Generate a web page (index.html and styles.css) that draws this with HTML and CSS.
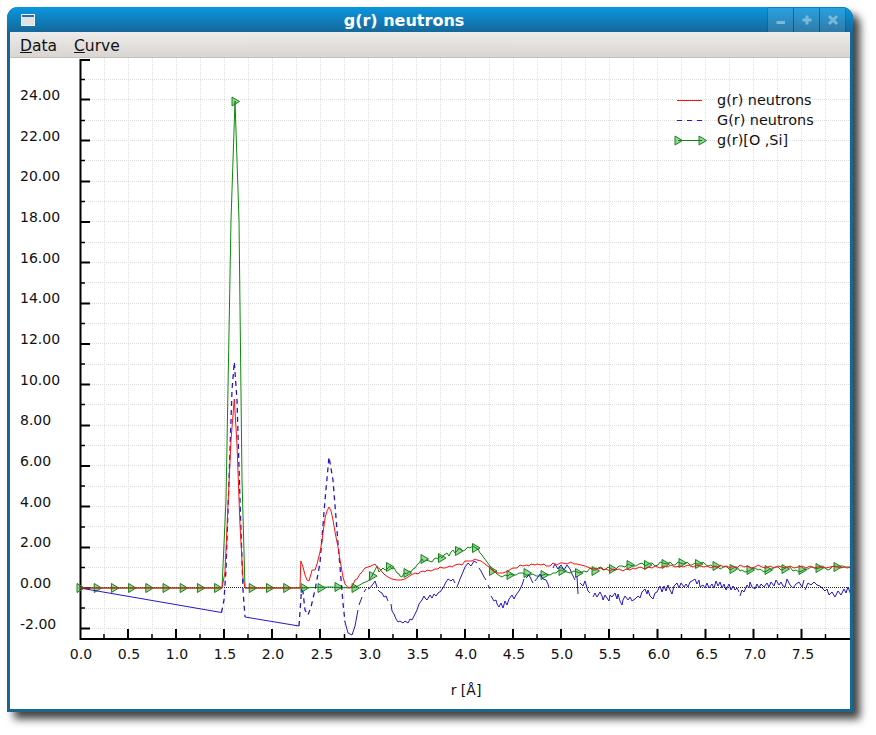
FILE: index.html
```html
<!DOCTYPE html>
<html lang="en">
<head>
<meta charset="utf-8">
<title>g(r) neutrons</title>
<link rel="stylesheet" href="styles.css">
</head>
<body>
<div class="window">
  <header class="titlebar">
    <svg class="win-icon" width="14" height="12" viewBox="0 0 14 12"><rect x="0.5" y="0.5" width="13" height="11" fill="#dfe3e4" stroke="#eef2f4"/><rect x="1" y="1" width="12" height="2" fill="#2f6f9f"/></svg>
    <h1 class="title">g(r) neutrons</h1>
    <div class="buttons">
      <div class="btn"><svg width="12" height="12" viewBox="0 0 12 12"><path d="M1.5 8.5h8.5" class="glyph"/></svg></div>
      <div class="btn"><svg width="12" height="12" viewBox="0 0 12 12"><path d="M6 1.5v9M1.5 6h9" class="glyph"/></svg></div>
      <div class="btn"><svg width="12" height="12" viewBox="0 0 12 12"><path d="M2 2l8 8M10 2l-8 8" class="glyph"/></svg></div>
    </div>
  </header>
  <nav class="menubar">
    <span class="menu-item"><u>D</u>ata</span>
    <span class="menu-item"><u>C</u>urve</span>
  </nav>
  <main class="plot">
    <svg class="chart" width="840" height="651" viewBox="10 58 840 651">
      <defs>
        <path id="m" class="marker" d="M-3 -4.5L4.5 0L-3 4.5Z"/>
      </defs>
      <path class="grid" d="M104.5 58V638M128.5 58V638M152.5 58V638M176.5 58V638M200.5 58V638M224.5 58V638M248.5 58V638M272.5 58V638M296.5 58V638M320.5 58V638M344.5 58V638M368.5 58V638M392.5 58V638M416.5 58V638M440.5 58V638M465.5 58V638M489.5 58V638M513.5 58V638M537.5 58V638M561.5 58V638M585.5 58V638M609.5 58V638M633.5 58V638M657.5 58V638M681.5 58V638M705.5 58V638M729.5 58V638M753.5 58V638M777.5 58V638M801.5 58V638M825.5 58V638M849.5 58V638"/>
      <path class="grid" d="M80 628.5H851M80 608.5H851M80 567.5H851M80 547.5H851M80 526.5H851M80 506.5H851M80 486.5H851M80 465.5H851M80 445.5H851M80 425.5H851M80 404.5H851M80 384.5H851M80 364.5H851M80 343.5H851M80 323.5H851M80 303.5H851M80 282.5H851M80 262.5H851M80 242.5H851M80 221.5H851M80 201.5H851M80 181.5H851M80 160.5H851M80 140.5H851M80 120.5H851M80 99.5H851M80 79.5H851"/>
      <path class="zero" d="M80 587.5H851"/>

      <path class="axis" d="M80.5 59V639M79.5 639H851"/>
      <path class="tick-major" d="M80 60H90M80 99.5H90M80 140.5H90M80 181.5H90M80 222H90M80 262.5H90M80 303.5H90M80 344H90M80 384.5H90M80 425.5H90M80 466H90M80 506.5H90M80 547.5H90M80 588H90M80 628.5H90"/>
      <path class="tick-minor" d="M80 79.5H85M80 120.5H85M80 160.5H85M80 201.5H85M80 242.5H85M80 283H85M80 323.5H85M80 364H85M80 404.5H85M80 445.5H85M80 486H85M80 527H85M80 567.5H85M80 608H85"/>
      <path class="tick-major" d="M128 629V638M176 629V638M224 629V638M272 629V638M320 629V638M369 629V638M417 629V638M465 629V638M513 629V638M561 629V638M609 629V638M657.5 629V638M705.5 629V638M753.5 629V638M801.5 629V638"/>
      <path class="tick-minor" d="M104 634V638M152 634V638M200 634V638M248 634V638M296.5 634V638M344.5 634V638M393 634V638M441 634V638M489 634V638M537 634V638M585 634V638M633.5 634V638M681.5 634V638M729.5 634V638M777.5 634V638M825.5 634V638"/>

      <g class="labels">
        <text x="20" y="100">24.00</text>
        <text x="20" y="141">22.00</text>
        <text x="20" y="181">20.00</text>
        <text x="20" y="222">18.00</text>
        <text x="20" y="263">16.00</text>
        <text x="20" y="303">14.00</text>
        <text x="20" y="344">12.00</text>
        <text x="20" y="385">10.00</text>
        <text x="20" y="425">8.00</text>
        <text x="20" y="466">6.00</text>
        <text x="20" y="507">4.00</text>
        <text x="20" y="547">2.00</text>
        <text x="20" y="588">0.00</text>
        <text x="20" y="629">-2.00</text>
      </g>
      <g class="labels centered">
        <text x="81" y="659">0.0</text>
        <text x="129" y="659">0.5</text>
        <text x="177" y="659">1.0</text>
        <text x="225" y="659">1.5</text>
        <text x="273" y="659">2.0</text>
        <text x="322" y="659">2.5</text>
        <text x="370" y="659">3.0</text>
        <text x="418" y="659">3.5</text>
        <text x="466" y="659">4.0</text>
        <text x="514" y="659">4.5</text>
        <text x="562" y="659">5.0</text>
        <text x="610" y="659">5.5</text>
        <text x="659" y="659">6.0</text>
        <text x="707" y="659">6.5</text>
        <text x="755" y="659">7.0</text>
        <text x="803" y="659">7.5</text>
        <text x="466" y="695">r [Å]</text>
      </g>

      <!-- g(r)[O,Si] -->
      <path class="c-green" d="M80 588L222 588 226 500 231 220 235 101 239 220 242 480 245 588L300 588 330 587 350 588 358 586 363 583 368 581 372 576 375 570 377 566 379 572 381 570 383 568 385 570 387 569 390 566 392 569 394 568 397 573 399 574 400 576 402 577 404 573 407 574 409 571 411 572 413 569 415 568 417 565 419 563 422 559 424 562 426 560 429 561 432 562 434 559 436 558 438 559 440 556 442 558 444 555 447 553 449 556 451 552 453 550 455 553 457 551 459 548 461 549 463 551 465 550 468 547 470 548 473 546 476 548 478 549 480 553 482 555 484 558 487 562 490 566 493 570 495 572 497 574 500 576 502 577 505 575 508 576 510 574 513 575 516 575 519 573 523 573 526 575 530 575 533 574 536 576 540 576 543 575 546 574 550 575 553 573 556 573 558 571 561 570 563 571 567 572 570 573 574 571 577 572 580 573 584 571 587 572 590 568 593 570 596 570 598 568 601 567 604 570 606 569 608 567 610 568 613 570 616 569 619 566 622 566 625 567 628 564 630 565 633 566 636 566 639 564 642 563 645 566 647 565 650 563 652 563 655 566 658 565 660 562 663 563 667 564 670 562 673 565 675 565 678 562 680 563 684 564 687 562 690 565 692 565 695 563 697 564 700 564 703 562 706 565 708 566 711 565 713 567 717 566 720 569 722 568 725 566 727 567 730 570 732 569 735 567 737 567 740 571 742 570 745 572 749 571 752 569 755 568 758 570 760 569 764 572 767 571 770 569 772 569 775 567 778 567 781 570 784 569 787 567 790 567 793 571 796 570 799 572 802 571 805 569 808 569 811 567 813 567 816 569 819 568 822 567 825 568 828 570 830 569 833 566 835 567 839 566 843 566 847 568 851 567"/>
      <g class="markers">
        <use href="#m" x="80" y="588"/><use href="#m" x="97.2" y="588"/><use href="#m" x="114.4" y="588"/><use href="#m" x="131.6" y="588"/><use href="#m" x="148.8" y="588"/><use href="#m" x="166" y="588"/><use href="#m" x="183.2" y="588"/><use href="#m" x="200.4" y="588"/><use href="#m" x="217.6" y="588"/><use href="#m" x="235" y="101.5"/><use href="#m" x="252.3" y="588"/><use href="#m" x="269.5" y="588"/><use href="#m" x="286.7" y="588"/><use href="#m" x="304" y="588"/><use href="#m" x="321" y="588"/><use href="#m" x="338" y="587"/><use href="#m" x="355" y="588"/><use href="#m" x="372.5" y="576"/><use href="#m" x="389.5" y="567"/><use href="#m" x="407" y="573"/><use href="#m" x="424" y="559"/><use href="#m" x="441.5" y="558"/><use href="#m" x="458.5" y="551"/><use href="#m" x="475.5" y="548"/><use href="#m" x="492.5" y="571"/><use href="#m" x="510" y="575"/><use href="#m" x="527" y="573"/><use href="#m" x="544" y="575"/><use href="#m" x="562" y="571"/><use href="#m" x="578.5" y="573"/><use href="#m" x="595" y="571"/><use href="#m" x="612.5" y="569"/><use href="#m" x="630" y="565"/><use href="#m" x="647.5" y="565"/><use href="#m" x="665" y="564"/><use href="#m" x="682" y="563"/><use href="#m" x="698.5" y="564"/><use href="#m" x="716" y="566"/><use href="#m" x="733" y="569"/><use href="#m" x="750" y="570"/><use href="#m" x="768" y="570"/><use href="#m" x="785" y="569"/><use href="#m" x="802" y="570"/><use href="#m" x="819" y="568"/><use href="#m" x="837" y="567"/>
      </g>

      <!-- G(r) neutrons -->
      <path class="c-blue" d="M80 588L221.5 612.5M245 617L299 626"/>
      <path class="c-blue dashed" d="M221.5 612.5L224 600 226 570 229 480 232 390 234.3 362 237 400 240 500 243 590 245 617M299 626L301.5 590 303 592 305 610 308 615 311 607 315 590 320 563 325 500 329 457 333 480 338 543 343 603 345 622"/>
      <path class="c-blue" d="M345 622L348 633 352 635 355 626 358 610M359 605L362 597M364 592L366 589M368 589L370 588 373 584 375 581 377 587M378 590L380 592 382 593 384 597 386 596 388 601M391 604L392 611 394 614 396 619 398 622 400 621 403 623 405 621 408 623 410 619 412 620 414 616 417 610 419 604 422 600 424 596 425 598 427 600 430 595 432 598 434 594 436 596 438 593 441 591 444 586 446 582 448 579 451 581 453 579 455 583M457 587L460 579 463 572 465 567 468 563 471 566 474 561 477 563M479 568L481 571 484 577 486 580M488 585L490 589M491 596L494 601 496 600 497 604 499 607 501 603 503 608 505 601 507 605 509 599 512 595 514 599 516 595 519 591 522 585 524 579M526 578L529 575 531 579 533 583M535 581L538 577 540 574 543 579 546 580 548 584 549 588M553 568L555 564 558 569 561 565 564 570 567 565 570 569 572 574 575 580M577 576L578 594M580 583L583 586 585 581 588 591 590 593M593 597L595 593 597 597 600 592 602 596 603 600 605 595 607 598 609 601 610 595 612 597 615 593 617 599 618 594 620 601 622 605 623 600 625 596 628 600 630 597 632 601 635 599 638 596 640 598 642 592 645 589 647 594 648 590 650 596 653 599 655 593 657 592 660 586 662 592 664 586 666 591 668 585 670 590 672 594 674 586 677 583 679 588 681 583 684 587 686 584 688 587 690 582 692 581 695 579 697 584 699 580 700 587 703 585 705 588 707 583 709 588 712 584 714 588 716 581 718 586 720 582 722 588 724 584 726 590 729 584 731 590 733 586 735 590 737 588 739 592M740 596L742 590 744 592 747 585 749 588 750 582 752 587 755 589 757 584 759 588 761 584 764 587 767 583 769 587 771 582 774 586 776 580 779 585 781 582 783 586 785 587 787 579 790 585 793 588 796 584 799 582 802 587 804 580M805 590L808 583 811 585 814 582 817 585 820 586 823 589 825 591 827 589 829 595 832 592 835 597 838 591 841 595 844 589 846 593 848 587 851 595"/>

      <!-- g(r) neutrons -->
      <path class="c-red" d="M80 588L222 588 225 572 228 505 231 440 234.3 399 237 445 240 525 243 578 245 588L300 588 300.8 561 303 567 305 575 307 580 309 581 311 574 312 570 315 570 317 564 320 552 322 541 325 518 327 511 329 507 331 511 333 520 335 532 338 547 340 560 343 577 345 584 348 587.5 351 587 353 585 355 580 357 579 360 574 362 572 365 568 368 567 371 566 375 564 377 567 380 569 382 572 385 575 388 577 392 579 397 580 401 580 405 579 408 577 411 575 415 573 418 574 420 572 423 571 425 572 427 570 431 571 435 569 438 569 440 567 443 568 445 568 450 566 452 567 455 565 459 564 462 565 465 561 468 561 472 561 475 559 477 560 481 561 485 564 489 567 493 571 498 573 503 573 508 571 511 569 513 568 517 568 520 565 523 566 527 565 529 566 531 564 535 565 537 564 541 565 544 564 546 566 550 566 553 563 557 565 560 563 563 563 567 564 571 562 574 564 577 564 581 565 585 566 590 568 593 569 596 568 598 569 601 568 603 570 606 569 610 571 613 569 615 570 619 569 623 571 626 569 630 570 633 568 635 569 640 567 645 569 648 567 652 568 655 566 660 568 664 566 667 567 671 565 675 567 680 566 683 567 688 565 693 567 697 565 700 566 704 567 707 566 711 568 714 566 718 568 720 565 724 567 727 566 730 568 733 566 737 568 740 565 744 567 748 566 751 568 755 567 758 565 762 567 766 568 770 566 774 568 778 566 782 567 785 568 790 566 794 568 798 567 802 566 806 568 810 566 814 568 818 567 822 566 826 568 830 567 835 566 840 568 845 567 851 567"/>

      <!-- legend -->
      <path class="c-red" d="M677 100.5H702"/>
      <path class="c-blue legend-dash" d="M677 120.5H702"/>
      <path class="c-green" d="M678 140.5H702"/>
      <use href="#m" x="678" y="140.5"/><use href="#m" x="702" y="140.5"/>
      <g class="labels legend">
        <text x="717" y="105">g(r) neutrons</text>
        <text x="717" y="125">G(r) neutrons</text>
        <text x="717" y="145">g(r)[O ,Si]</text>
      </g>
    </svg>
  </main>
</div>
</body>
</html>
```
FILE: styles.css
```css
html, body {
  margin: 0;
  height: 100%;
  background: #fff;
  overflow: hidden;
}
body {
  font-family: "DejaVu Sans", sans-serif;
  color: #111;
}
.window {
  box-sizing: border-box;
  width: 846px;
  height: 705px;
  margin: 7px 0 0 7px;
  display: flex;
  flex-direction: column;
  background: #fff;
  border: solid #1a668f;
  border-width: 0 3px 3px;
  border-radius: 11px 11px 0 0;
  box-shadow: 7px 7px 8px rgba(0, 0, 0, 0.75);
}
.titlebar {
  flex: none;
  height: 25px;
  margin: 0 -3px;
  padding: 1px 8px 0 14px;
  box-sizing: border-box;
  display: flex;
  align-items: center;
  border-radius: 11px 11px 0 0;
  background: linear-gradient(#0a97e0, #15689a);
}
.win-icon { flex: none; }
.title {
  flex: 1;
  margin: 0;
  padding-left: 5px;
  font-size: 16px;
  font-weight: bold;
  color: #fff;
  text-align: center;
}
.buttons {
  flex: none;
  display: flex;
  align-self: stretch;
  gap: 1px;
}
.btn {
  width: 25px;
  display: flex;
  align-items: center;
  justify-content: center;
  background: rgba(255, 255, 255, 0.12);
  box-shadow: 0 0 0 0.5px rgba(0, 50, 90, 0.4);
}
.glyph {
  fill: none;
  stroke: #7ab9d9;
  stroke-width: 3;
}
.menubar {
  flex: none;
  height: 26px;
  box-sizing: border-box;
  padding: 3px 0 0 10px;
  display: flex;
  align-items: center;
  gap: 17px;
  font-size: 15.5px;
  background: linear-gradient(#eeecea, #d8d5d2);
  border-bottom: 1px solid #c4c0bc;
}
.plot {
  flex: 1;
  min-height: 0;
  background: #fff;
}
.chart { display: block; }
.grid {
  fill: none;
  stroke: #dedede;
  stroke-width: 1;
  stroke-dasharray: 1 1;
}
.zero {
  fill: none;
  stroke: #222;
  stroke-width: 1;
  stroke-dasharray: 1 1;
}
.axis {
  fill: none;
  stroke: #000;
  stroke-width: 2;
}
.tick-major {
  fill: none;
  stroke: #000;
  stroke-width: 2;
}
.tick-minor {
  fill: none;
  stroke: #000;
  stroke-width: 1.5;
}
.labels text {
  font-family: "DejaVu Sans", sans-serif;
  font-size: 14px;
  fill: #111;
}
.centered text { text-anchor: middle; }
.legend text { font-size: 14.4px; }
.c-green {
  fill: none;
  stroke: #0a8a0a;
  stroke-width: 1;
}
.c-red {
  fill: none;
  stroke: #ff1010;
  stroke-width: 1;
}
.c-blue {
  fill: none;
  stroke: #2418c8;
  stroke-width: 1;
}
.dashed {
  stroke-width: 1.3;
  stroke-dasharray: 5 4;
}
.legend-dash { stroke-dasharray: 5 5; }
.marker {
  fill: rgba(20, 140, 20, 0.42);
  stroke: #14861a;
  stroke-width: 1;
}
```
